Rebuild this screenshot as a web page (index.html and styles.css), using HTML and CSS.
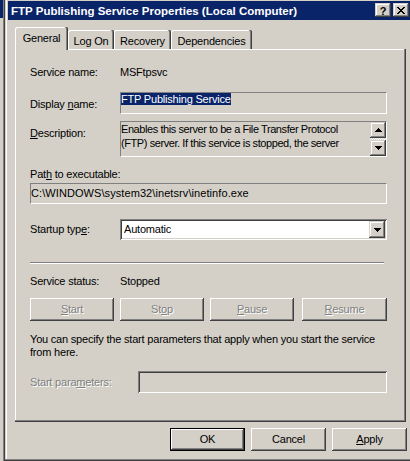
FILE: index.html
```html
<!DOCTYPE html>
<html lang="en">
<head>
<meta charset="utf-8">
<title>FTP Publishing Service Properties</title>
<link rel="stylesheet" href="styles.css">
</head>
<body>
<div class="screen">
  <div class="behind"><div class="behind-cap"></div></div>
  <div class="window">
    <div class="titlebar">
      <span class="title">FTP Publishing Service Properties (Local Computer)</span>
      <div class="caps">
        <span class="capbtn help">?</span>
        <span class="capbtn close"><svg width="8" height="7" viewBox="0 0 8 7" shape-rendering="crispEdges"><path d="M0 0h2v1H0zM6 0h2v1H6zM1 1h2v1H1zM5 1h2v1H5zM2 2h4v1H2zM3 3h2v1H3zM2 4h4v1H2zM1 5h2v1H1zM5 5h2v1H5zM0 6h2v1H0zM6 6h2v1H6z"/></svg></span>
      </div>
    </div>
    <div class="client">
      <div class="tabs">
        <div class="tab selected t-general">General</div>
        <div class="tab t-logon">Log On</div>
        <div class="tab t-recovery">Recovery</div>
        <div class="tab t-deps">Dependencies</div>
      </div>
      <div class="panel">
        <div class="row row-name">
          <span class="label">Service name:</span>
          <span class="value">MSFtpsvc</span>
        </div>
        <div class="row row-display">
          <span class="label">Display <u>n</u>ame:</span>
          <div class="field field-display"><span class="selection">FTP Publishing Service</span></div>
        </div>
        <div class="row row-desc">
          <span class="label"><u>D</u>escription:</span>
          <div class="field field-desc">
            <div class="desc-text">Enables this server to be a File Transfer Protocol<br>(FTP) server. If this service is stopped, the server</div>
            <div class="vscroll">
              <span class="sbtn"><svg width="7" height="4" viewBox="0 0 7 4" shape-rendering="crispEdges"><path d="M3 0h1v1H3zM2 1h3v1H2zM1 2h5v1H1zM0 3h7v1H0z"/></svg></span>
              <span class="strack"></span>
              <span class="sbtn"><svg width="7" height="4" viewBox="0 0 7 4" shape-rendering="crispEdges"><path d="M0 0h7v1H0zM1 1h5v1H1zM2 2h3v1H2zM3 3h1v1H3z"/></svg></span>
            </div>
          </div>
        </div>
        <div class="path-label">Pat<u>h</u> to executable:</div>
        <div class="field field-path">C:\WINDOWS\system32\inetsrv\inetinfo.exe</div>
        <div class="row row-startup">
          <span class="label">Startup typ<u>e</u>:</span>
          <div class="combo">
            <span class="combo-text">Automatic</span>
            <span class="combo-btn"><svg width="7" height="4" viewBox="0 0 7 4" shape-rendering="crispEdges"><path d="M0 0h7v1H0zM1 1h5v1H1zM2 2h3v1H2zM3 3h1v1H3z"/></svg></span>
          </div>
        </div>
        <div class="separator"></div>
        <div class="row row-status">
          <span class="label">Service status:</span>
          <span class="value">Stopped</span>
        </div>
        <div class="svc-buttons">
          <span class="btn disabled b-start"><u>S</u>tart</span>
          <span class="btn disabled b-stop">St<u>o</u>p</span>
          <span class="btn disabled b-pause"><u>P</u>ause</span>
          <span class="btn disabled b-resume"><u>R</u>esume</span>
        </div>
        <p class="hint">You can specify the start parameters that apply when you start the service<br>from here.</p>
        <div class="row row-params">
          <span class="label label-params disabled-text">Start para<u>m</u>eters:</span>
          <div class="field-params"></div>
        </div>
      </div>
      <div class="dlg-buttons">
        <span class="btn default">OK</span>
        <span class="btn">Cancel</span>
        <span class="btn"><u>A</u>pply</span>
      </div>
    </div>
  </div>
</div>
</body>
</html>
```

FILE: styles.css
```css
* { box-sizing: border-box; margin: 0; padding: 0; }

html, body {
  width: 410px;
  height: 461px;
  overflow: hidden;
}

body {
  background: #D4D0C8;
  font-family: "Liberation Sans", Arial, sans-serif;
  font-size: 11px;
  line-height: 13px;
  letter-spacing: -0.2px;
  color: #000;
}

u { text-decoration: underline; text-underline-offset: 1px; }

.screen {
  display: flex;
  width: 410px;
  height: 461px;
  overflow: hidden;
  background: #D4D0C8;
}

.behind {
  flex: none;
  width: 5px;
  height: 461px;
  box-shadow: inset -1px 0 #404040, inset -2px 0 #808080;
}
.behind-cap { width: 3px; height: 18px; background: #0A246A; }

.window {
  flex: none;
  width: 411px;
  height: 461px;
  padding: 1px 3px 3px 3px;
  box-shadow: inset 0 -1px #404040, inset 0 -2px #808080, inset 1px 0 #D4D0C8, inset 2px 0 #fff;
}

/* title bar */
.titlebar {
  display: flex;
  align-items: flex-start;
  height: 19px;
  background: #0A246A;
  color: #fff;
}
.title {
  padding: 3px 0 0 3px;
  font-weight: bold;
  font-size: 11.5px;
  line-height: 14px;
  letter-spacing: 0;
  white-space: nowrap;
}
.caps {
  display: flex;
  gap: 2px;
  margin: 2px 4px 0 auto;
}
.capbtn {
  display: flex;
  align-items: center;
  justify-content: center;
  width: 16px;
  height: 14px;
  background: #D4D0C8;
  color: #000;
  box-shadow: inset -1px -1px #404040, inset 1px 1px #D4D0C8, inset -2px -2px #808080, inset 2px 2px #fff;
}
.help {
  font-weight: bold;
  font-size: 11px;
  line-height: 14px;
  letter-spacing: 0;
  padding-top: 1px;
}
.close svg { display: block; fill: #000; }

/* client */
.client { padding-left: 7px; }

.tabs {
  position: relative;
  z-index: 1;
  display: flex;
  align-items: flex-end;
  height: 22px;
  margin-top: 7px;
}
.tab {
  height: 19px;
  padding-top: 5px;
  text-align: center;
  white-space: nowrap;
  background: #D4D0C8;
  border-radius: 2px 2px 0 0;
  box-shadow: inset -1px 0 #404040, inset -2px 0 #808080, inset 1px 1px #fff;
}
.tab.selected {
  height: 23px;
  margin-bottom: -1px;
  padding-top: 5px;
}
.t-general { width: 53px; }
.t-logon { width: 46px; }
.t-recovery { width: 57px; }
.t-deps { width: 81px; }

.panel {
  width: 391px;
  height: 373px;
  padding: 17px 0 0 15px;
  box-shadow: inset -1px -1px #404040, inset -2px -2px #808080, inset 1px 1px #fff;
}

.row { display: flex; align-items: flex-start; }
.label { flex: none; width: 90px; white-space: nowrap; }
.value { white-space: nowrap; }

.row-name { height: 13px; }

.field {
  border: 1px solid;
  border-color: #808080 #fff #fff #808080;
  background: #D4D0C8;
  white-space: nowrap;
  overflow: hidden;
}

.row-display { margin-top: 13px; }
.row-display .label { padding-top: 6px; }
.field-display { width: 267px; height: 22px; }
.selection { background: #0A246A; color: #fff; }

.row-desc { margin-top: 7px; }
.row-desc .label { padding-top: 6px; }
.field-desc { display: flex; width: 267px; height: 36px; }
.desc-text { flex: 1; line-height: 14px; letter-spacing: -0.42px; overflow: hidden; }
.vscroll { display: flex; flex-direction: column; width: 16px; flex: none; }
.sbtn {
  display: flex;
  align-items: center;
  justify-content: center;
  height: 16px;
  background: #D4D0C8;
  box-shadow: inset -1px -1px #404040, inset 1px 1px #D4D0C8, inset -2px -2px #808080, inset 2px 2px #fff;
}
.sbtn svg, .combo-btn svg { display: block; fill: #000; }
.strack {
  flex: 1;
  background: repeating-conic-gradient(#fff 0 25%, #D4D0C8 0 50%) 0 0 / 2px 2px;
}

.path-label { margin-top: 11px; height: 13px; white-space: nowrap; }
.field-path { margin-top: 2px; width: 357px; height: 21px; padding-top: 3px; letter-spacing: 0.08px; }

.row-startup { margin-top: 15px; height: 21px; align-items: center; }
.combo {
  display: flex;
  width: 267px;
  height: 21px;
  padding: 2px;
  background: #fff;
  box-shadow: inset 1px 1px #808080, inset -1px -1px #fff, inset 2px 2px #404040, inset -2px -2px #D4D0C8;
}
.combo-text { flex: 1; padding-left: 2px; line-height: 17px; }
.combo-btn {
  display: flex;
  align-items: center;
  justify-content: center;
  width: 16px;
  height: 17px;
  background: #D4D0C8;
  box-shadow: inset -1px -1px #404040, inset 1px 1px #D4D0C8, inset -2px -2px #808080, inset 2px 2px #fff;
}

.separator {
  margin-top: 22px;
  width: 354px;
  height: 2px;
  border-top: 1px solid #808080;
  border-bottom: 1px solid #fff;
}

.row-status { margin-top: 11px; height: 13px; }

.svc-buttons { display: flex; margin-top: 10px; height: 23px; }
.svc-buttons .btn { width: 84px; }
.b-stop, .b-pause { margin-left: 6px; }
.b-resume { margin-left: 8px; width: 85px !important; }

.btn {
  display: flex;
  align-items: center;
  justify-content: center;
  width: 75px;
  height: 23px;
  background: #D4D0C8;
  white-space: nowrap;
  box-shadow: inset -1px -1px #404040, inset 1px 1px #fff, inset -2px -2px #808080;
}
.btn.default {
  border: 1px solid #000;
}
.disabled, .disabled-text {
  color: #808080;
  text-shadow: 1px 1px 0 #fff;
}

.hint { margin-top: 12px; line-height: 13px; white-space: nowrap; }

.row-params { margin-top: 12px; height: 22px; align-items: center; }
.label-params { width: 108px; }
.field-params {
  width: 249px;
  height: 22px;
  background: #D4D0C8;
  box-shadow: inset 1px 1px #808080, inset -1px -1px #fff, inset 2px 2px #404040, inset -2px -2px #D4D0C8;
}

.dlg-buttons {
  display: flex;
  justify-content: flex-end;
  gap: 6px;
  width: 392px;
  margin-top: 6px;
}
```
